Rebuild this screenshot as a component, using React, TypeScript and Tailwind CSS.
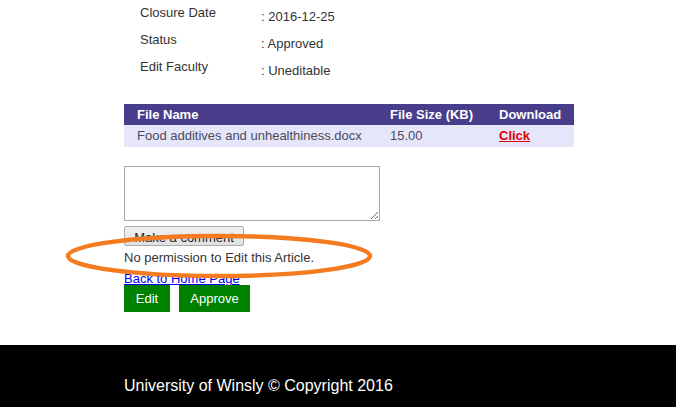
export default function App() {
  const info = [
    { label: "Closure Date", value: "2016-12-25" },
    { label: "Status", value: "Approved" },
    { label: "Edit Faculty", value: "Uneditable" },
  ];

  return (
    <div className="relative w-[676px] h-[407px] overflow-hidden bg-white font-['Liberation_Sans',Arial,sans-serif] text-[13px] text-[#333]">
      <div className="pl-[124px] h-[345px]">
        <div className="pl-[16px]">
          {info.map((row) => (
            <div key={row.label} className="flex h-[27px] leading-[18px]">
              <div className="w-[121px] pt-[4px]">{row.label}</div>
              <div className="pt-[8px]">: {row.value}</div>
            </div>
          ))}
        </div>

        <div className="mt-[23px] w-[450px]">
          <div className="grid grid-cols-[253px_109px_88px] h-[21px] items-center bg-[#483d8b] text-white font-bold">
            <div className="pl-[13px]">File Name</div>
            <div className="pl-[13px]">File Size (KB)</div>
            <div className="pl-[13px]">Download</div>
          </div>
          <div className="grid grid-cols-[253px_109px_88px] h-[22px] items-center bg-[#e6e6fa] text-[#4a4a5a]">
            <div className="pl-[13px]">Food additives and unhealthiness.docx</div>
            <div className="pl-[13px]">15.00</div>
            <div className="pl-[13px]">
              <a href="#" className="text-[#e00000] font-bold underline">Click</a>
            </div>
          </div>
        </div>

        <textarea className="block mt-[19px] w-[256px] h-[55px] border border-[#a9a9a9] resize-y" />
        <button className="block mt-[5px] w-[120px] h-[20px] pt-[2px] border border-[#adadad] rounded-[2px] bg-gradient-to-b from-[#f0f0f0] to-[#e1e1e1] text-[13px] text-[#222] leading-[18px]">
          Make a comment
        </button>
        <div className="h-[20px] leading-[20px] mt-[2px]">No permission to Edit this Article.</div>
        <a href="#" className="block h-[17px] pt-[2px] leading-[18px] text-[#0000ee] underline">Back to Home Page</a>
        <div className="flex gap-[9px]">
          <button className="w-[46px] h-[27px] bg-[#008000] text-white text-[13px]">Edit</button>
          <button className="w-[71px] h-[27px] bg-[#008000] text-white text-[13px]">Approve</button>
        </div>
      </div>

      <footer className="h-[62px] bg-black text-white text-[16px] pl-[124px] pt-[31px] leading-[20px]">
        University of Winsly © Copyright 2016
      </footer>

      <svg className="absolute left-0 top-0 pointer-events-none" width="676" height="407">
        <ellipse cx="219" cy="256" rx="151" ry="20" fill="none" stroke="#f47b20" strokeWidth="4.5" />
      </svg>
    </div>
  );
}
